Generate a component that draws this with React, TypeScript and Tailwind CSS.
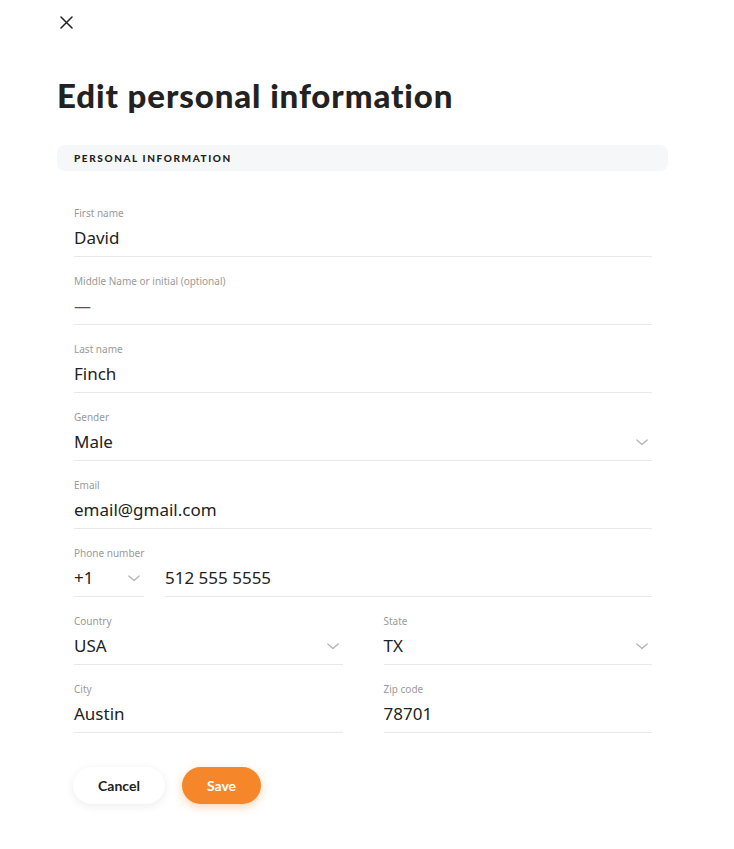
import React from "react";

const Chevron = () => (
  <svg width="12" height="7" viewBox="0 0 12 7" fill="none" className="mr-[4px] shrink-0">
    <path d="M0.8 1l5.2 4.5L11.2 1" stroke="#b5b5b5" strokeWidth="1.3" strokeLinecap="round" strokeLinejoin="round" />
  </svg>
);

type FieldProps = { label: string; value: string; select?: boolean; className?: string; muted?: boolean };

const Field = ({ label, value, select, className = "", muted }: FieldProps) => (
  <div className={`flex flex-col border-b border-[#e8e8e8] pt-[17px] pb-[6px] ${className}`}>
    <span className="text-[10px] leading-[14px] text-[#9a9a9a]">{label}</span>
    <div className="mt-[6px] flex h-6 items-center justify-between">
      <span className={`text-[17px] leading-6 ${muted ? "text-[#555]" : "text-[#222]"}`}>{value}</span>
      {select ? <Chevron /> : null}
    </div>
  </div>
);

export default function App() {
  return (
    <div className="min-h-[849px] bg-white pl-[57px] pr-[66px] font-['Noto_Sans',sans-serif] text-[#222]">
      <div className="pt-[16px] pl-[3px]">
        <svg width="13" height="13" viewBox="0 0 13 13" fill="none">
          <path d="M1 1l11 11M12 1L1 12" stroke="#222" strokeWidth="1.5" strokeLinecap="round" />
        </svg>
      </div>

      <h1 className="mt-[46px] font-['Lato',sans-serif] text-[33px] font-black leading-10 tracking-[0.9px] text-[#222]">
        Edit personal information
      </h1>

      <div className="mt-[30px] flex h-[26px] items-center rounded-lg bg-[#f6f7f9] px-[17px]">
        <span className="font-['Lato',sans-serif] text-[10px] font-black tracking-[1.6px] text-[#222]">PERSONAL INFORMATION</span>
      </div>

      <div className="mt-[18px] flex flex-col px-[17px] pr-[16px]">
        <Field label="First name" value="David" />
        <Field label="Middle Name or initial (optional)" value="—" muted />
        <Field label="Last name" value="Finch" />
        <Field label="Gender" value="Male" select />
        <Field label="Email" value="email@gmail.com" />

        <div className="flex gap-[21px]">
          <div className="flex w-[70px] flex-col border-b border-[#e8e8e8] pt-[17px] pb-[6px]">
            <span className="text-[10px] leading-[14px] whitespace-nowrap text-[#9a9a9a]">Phone number</span>
            <div className="mt-[6px] flex h-6 items-center justify-between">
              <span className="text-[17px] leading-6">+1</span>
              <Chevron />
            </div>
          </div>
          <div className="flex flex-1 flex-col border-b border-[#e8e8e8] pt-[17px] pb-[6px]">
            <span className="text-[10px] leading-[14px]">&nbsp;</span>
            <div className="mt-[6px] flex h-6 items-center">
              <span className="text-[17px] leading-6">512 555 5555</span>
            </div>
          </div>
        </div>

        <div className="grid grid-cols-2 gap-x-[41px]">
          <Field label="Country" value="USA" select />
          <Field label="State" value="TX" select />
          <Field label="City" value="Austin" />
          <Field label="Zip code" value="78701" />
        </div>
      </div>

      <div className="mt-[34px] flex gap-[17px] pl-[16px]">
        <button className="h-[37px] w-[92px] rounded-full bg-white font-['Lato',sans-serif] text-[14px] font-bold text-[#222] shadow-[0_2px_10px_rgba(0,0,0,0.08)]">
          Cancel
        </button>
        <button className="h-[37px] w-[79px] rounded-full bg-[#f5862a] font-['Lato',sans-serif] text-[14px] font-bold text-white shadow-[0_3px_10px_rgba(245,134,42,0.35)]">
          Save
        </button>
      </div>
    </div>
  );
}
